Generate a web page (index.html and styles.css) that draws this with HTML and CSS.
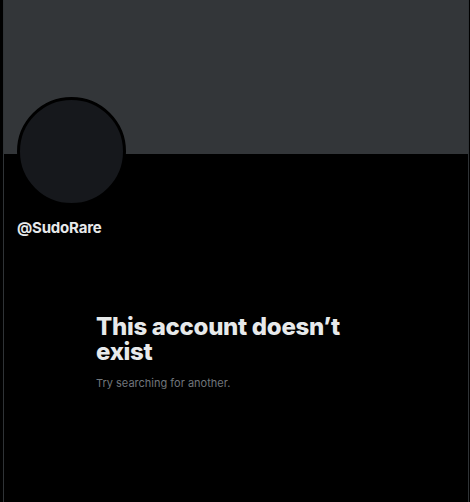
FILE: index.html
```html
<!DOCTYPE html>
<html>
<head>
<meta charset="utf-8">
<link rel="stylesheet" href="styles.css">
</head>
<body>
<div class="column">
  <div class="banner"></div>
  <div class="avatar"></div>
  <div class="handle">@SudoRare</div>
  <div class="empty">
    <h1 class="empty-title">This account doesn’t exist</h1>
    <p class="empty-sub">Try searching for another.</p>
  </div>
</div>
</body>
</html>
```
FILE: styles.css
```css
html, body {
  margin: 0;
  padding: 0;
  background: #000;
  height: 100%;
}
body {
  font-family: Inter, "Noto Sans", sans-serif;
  color: #e7e9ea;
}
.column {
  margin: 0 1px 0 3px;
  border-left: 1px solid #2f3336;
  border-right: 1px solid #2f3336;
  height: 100%;
  box-sizing: border-box;
}
.banner {
  height: 154px;
  background: #333639;
}
.avatar {
  width: 103px;
  height: 103px;
  margin: -57px 0 0 13px;
  border: 3px solid #000;
  border-radius: 50%;
  background: #16181c;
  position: relative;
}
.handle {
  margin: 12px 0 0 13px;
  font-size: 15px;
  line-height: 20px;
  font-weight: 700;
  letter-spacing: -0.2px;
}
.empty {
  padding: 76px 0 0 92px;
  width: 260px;
}
.empty-title {
  margin: 0;
  font-size: 24px;
  line-height: 25px;
  font-weight: 800;
  letter-spacing: -0.3px;
}
.empty-sub {
  margin: 12px 0 0;
  font-size: 11px;
  line-height: 15px;
  color: #71767b;
}
```
